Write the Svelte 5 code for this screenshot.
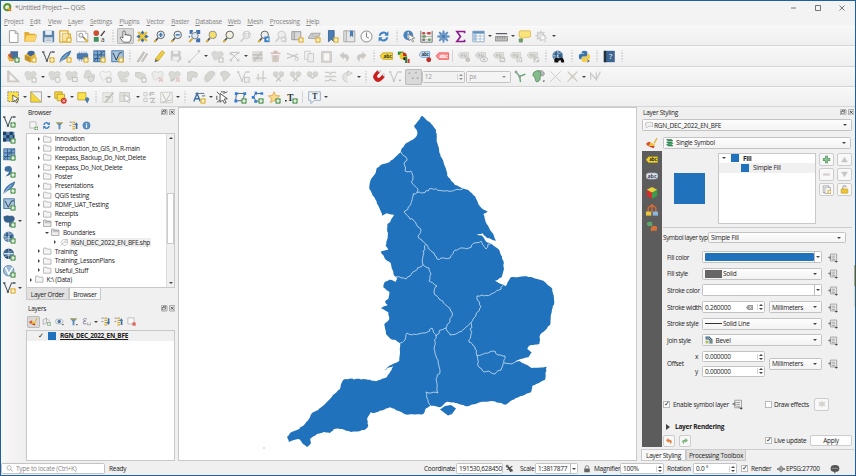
<script>
  // ---------- icon drawing helpers (16 x 16 grid) ----------
  const badge = (c, x = 9, y = 9) =>
    `<rect x="${x}" y="${y}" width="6.6" height="6.6" rx="1" fill="${c}"/><path d="M${x + 3.3} ${y + 1.2}v4.2M${x + 1.2} ${y + 3.3}h4.2" stroke="#fff" stroke-width="1.5"/>`;
  const yel = badge('#e2b73a');
  const grn = badge('#5f9d5f');
  const gry = badge('#c8c8c5');
  const blob = (c = '#d8d8d5') =>
    `<path d="M1 5c0-3 3-4 5-3s3 1 5 0 4 1 4 3-2 4-4 4-2 0-3 2-5 2-5-1C3 8 1 7 1 5z" fill="${c}" stroke="#c6c6c3" stroke-width=".7"/>`;
  const lens = (c = '#333', f = '#f4f6f6', inner = '') =>
    `<path d="M2 14.5l4-4.5" stroke="#555" stroke-width="2"/><path d="M1.6 15l2-2.2" stroke="#e0b030" stroke-width="2.4"/><circle cx="9.5" cy="6" r="4.6" fill="${f}" stroke="${c}" stroke-width="1.1"/>${inner}`;
  const greyLens = `<path d="M2 14.5l4-4.5" stroke="#ccc" stroke-width="2"/><circle cx="9.5" cy="6" r="4.6" fill="#eee" stroke="#c6c6c6" stroke-width="1.1"/>`;
  const tag = (f, s, t = '#333', a = 'abc') =>
    `<path d="M0 7.500l3.500-4h12v8h-12z" fill="${f}" stroke="${s}" stroke-width=".9"/><text x="9.3" y="9.700" font-size="6" font-weight="700" text-anchor="middle" fill="${t}" font-family="Open Sans, sans-serif" letter-spacing="-.2">${a}</text>`;
  const greyTag = (e) => `<path d="M0 6l3-3h10v7H3z" fill="#dededb" stroke="#c9c9c5" stroke-width=".8"/><path d="M4 5.5h2v2H4zM8 5v3h2V5.5" fill="none" stroke="#b5b5b5" stroke-width=".9"/>${e}`;
  const vee = (c, e) => `<path d="M1.5 2.5l4.5 11L10.500 2.500h3" fill="none" stroke="${c}" stroke-width="1.3"/><path d="M0 1.500h3v2H0zM12.500 1.500h3v2h-3zM4.800 12h2.500v2.500H4.800z" fill="${c}"/>${e}`;
  const globe = `<circle cx="7" cy="7" r="6.5" fill="#5d83a8"/><path d="M1 7h12M7 .5v13M2 3.500q5 3 10 0M2 10.500q5-3 10 0" stroke="#d5e3ef" stroke-width=".8" fill="none"/><path d="M3 4l3-2 1 3-2 3zM8 5l4-1v4l-3 2z" fill="#2f5f8a"/>`;
  const quill = `<path d="M1 15Q2 6 14.500 1 13 9 5 12z" fill="#4d86b8" stroke="#2d5a85" stroke-width=".7"/><path d="M1 15L10 5" stroke="#dce9f4" stroke-width=".8"/>`;
  const grid = `<rect x="1" y="1" width="13.500" height="13.500" fill="#7fa7cd" stroke="#34699c"/><path d="M1 6h13M1 10.500h13M5.500 1v13M10 1v13M1 14L10 4l4-3" stroke="#275684" stroke-width="1" fill="none"/>`;
  const cursor = (c = '#333') => `<path d="M7 5l7.500 5-3.300.4 2 3.500-1.400.9-2-3.600L7.500 13.500z" fill="#fff" stroke="${c}" stroke-width=".9"/>`;
  const funnel = (c = '#5f8fb8') => `<path d="M1.500 2h13L9.700 8v6.500H6.300V8z" fill="${c}"/><path d="M1.500 2h13l-1.300 2H2.800z" fill="#d9b33c"/>`;
  const sync = `<path d="M2 7a6 6 0 0 1 10-3.500l2-2V7H9l1.600-1.800A4 4 0 0 0 4.500 7zM14 9a6 6 0 0 1-10 3.500l-2 2V9h5l-1.600 1.800A4 4 0 0 0 11.500 9z" fill="#3f83c4"/>`;
  const info = `<circle cx="8" cy="8" r="6.500" fill="#5b8fc4" stroke="#3f6fa5" stroke-width=".8"/><path d="M8 6.800v5M8 3.800v1.800" stroke="#fff" stroke-width="2"/>`;
  const dots = (c) => `<path d="M2 3h3v3H2zM11 2h3v3h-3zM2 11h3v3H2zM11 11h3v3h-3z" fill="${c}"/>`;
  const undo = (c) => `<path d="M2 6.500L7 2v3c5 0 7 2 6.500 5-.4 2.500-2.500 4-4.500 4 2-2 2-4.500-2-4.500V12z" fill="${c}"/>`;
  const redo = (c) => `<g transform="matrix(-1 0 0 1 16 0)">${undo(c)}</g>`;
  const tree = `<path d="M6 2h5M6 6h5M6 10h5M6 14h5" stroke="#d6a92c" stroke-width="2"/><path d="M1 2h4M1 8h3" stroke="#777" stroke-width="1.400"/>`;

  const icons = {
    new: `<path d="M3 .8h7l3.500 3.500v11H3z" fill="#fff" stroke="#888"/><path d="M10 .8v3.500h3.500" fill="#ddd" stroke="#888" stroke-width=".8"/>`,
    open: `<path d="M.5 14V2.500h5l1.500 2h7V7" fill="#e2ac2b"/><path d="M.5 14L3 6h12.700l-2.500 8z" fill="#fcd56b" stroke="#dba83a" stroke-width=".6"/>`,
    save: `<rect x="1" y="1" width="14" height="14" rx="1" fill="#5a82a8"/><rect x="4" y="1" width="8" height="5" fill="#e8eef3"/><rect x="3" y="9" width="10" height="6" fill="#dfe6ec"/><path d="M4.500 11h7M4.500 13h7" stroke="#8fa5ba" stroke-width=".8"/>`,
    layout: `<path d="M1 1h10v4h3v10H1z" fill="#fff" stroke="#dcaa2c" stroke-width="1.600"/><path d="M4 4h8v10H4z" fill="#f6e3a5" stroke="#d8aa34"/>${yel}`,
    layouts: `<path d="M1 1.500h11v3h2.500v10H1z" fill="#fff" stroke="#a2a2a2"/><path d="M6 6l6 6" stroke="#666" stroke-width="1.600"/><path d="M10.500 10.500l4 4" stroke="#e0b030" stroke-width="2.400"/><circle cx="6" cy="6.500" r="2.500" fill="#eee" stroke="#888"/>`,
    style: `<circle cx="4" cy="3.800" r="3.500" fill="#c94f32"/><rect x="1" y="8.500" width="6" height="6" fill="#3e9060"/><path d="M14.500 1l-5 6.500" stroke="#444" stroke-width="1.700"/><text x="12" y="14.500" font-size="8" text-anchor="middle" fill="#333" font-family="Open Sans, sans-serif">a</text>`,
    hand: `<path d="M5.500 15L2 10.500Q.8 8.800 2.500 8.500L4.800 10V2.500q0-1.500 1.400-1.500t1.400 1.500v4q0-1.200 1.200-1.200T10 6.700q.1-1 1.200-1t1.200 1.300q.2-.8 1.200-.8T14.800 8v3L13 15z" fill="#fff" stroke="#444" stroke-width=".9"/>`,
    panSel: `<path d="M8 .5l2.800 3.500H9.500v2.500H12V5.200L15.500 8 12 10.800V9.500H9.500V12h1.300L8 15.500 5.200 12h1.300V9.500H4v1.300L.5 8 4 5.200v1.300h2.500V4H5.200z" fill="#466fa0"/><path d="M2.500 2.500l4 4M13.500 2.500l-4 4M2.500 13.500l4-4M13.500 13.500l-4-4" stroke="#e4bd2f" stroke-width="2.600"/><rect x="5.500" y="5.500" width="5" height="5" fill="#f0cc3b"/>`,
    zin: lens('#555', '#e5edf4', '<path d="M9.500 3.500v5M7 6h5" stroke="#3c75b5" stroke-width="1.800"/>'),
    zout: lens('#555', '#e5edf4', '<path d="M7 6h5" stroke="#3c75b5" stroke-width="1.800"/>'),
    zfull: `<path d="M1.500 15l4-4.500" stroke="#d8aa34" stroke-width="2.200"/><circle cx="8.500" cy="7" r="4" fill="#dce8f2" stroke="#667"/><path d="M2 0h4v2L4 5H2zM15 0h-5v2l2 3h3zM1 10V7l2 1zM15 15h-5v-3l2-2h3z" fill="#3f72ad"/>`,
    zsel: lens('#888', '#f5df6f'),
    zlayer: lens('#555', '#f3f1df'),
    z11: greyLens + '<text x="9.500" y="8" font-size="5.500" text-anchor="middle" fill="#999" font-family="Open Sans, sans-serif">1:1</text>',
    zlast: lens('#555', '#eee', '<path d="M9 8h6.500v7H9z" fill="#3f83c4"/><path d="M14 9.500l-3 2 3 2" fill="#fff"/>'),
    znext: greyLens + '<path d="M9 8h6.500v7H9z" fill="#d0d0d0"/><path d="M10.500 9.500l3 2-3 2" fill="#fff"/>',
    newmap: `<path d="M1 2h11v10H1z" fill="#d8d8d8" stroke="#8e8e8e"/><path d="M4 2v10" stroke="#8e8e8e"/>${yel}`,
    new3d: `<path d="M0 10l4-6h11l-3 7z" fill="#cfcfcf" stroke="#989898"/><path d="M4 4l3 4h6" stroke="#aaa" fill="none"/>${yel}`,
    bookNew: `<path d="M3 .5h7v14l-3.500-3-3.500 3z" fill="#4a7db3" stroke="#345f8e"/>${yel}`,
    book: `<path d="M1 1h13.500v13.500H1z" fill="#e7e7e7" stroke="#9a9a9a"/><path d="M4 1v13" stroke="#9a9a9a"/><path d="M8.500 1h4v8l-2-2-2 2z" fill="#4a7db3"/>`,
    clock: `<circle cx="8" cy="8" r="6.800" fill="#fafafa" stroke="#888" stroke-width="1.200"/><path d="M8 3v5.500l3 1.500" fill="none" stroke="#777" stroke-width="1.100"/>`,
    sync,
    identify: `<circle cx="6.500" cy="6.500" r="6" fill="#4d83bb"/><path d="M6.500 5.500v4.500M6.500 2.800v1.700" stroke="#fff" stroke-width="1.700"/>${cursor('#777')}`,
    abacus: `<path d="M1 1v14M15 1v14M1 15h14" stroke="#777" stroke-width="1.200"/><path d="M1 4h14M1 8h14M1 12h14" stroke="#aaa"/><path d="M3 2.500h3v3H3zM9 2.500h4v3H9z" fill="#c94848"/><path d="M3 6.500h4v3H3zM10 10.500h3v3h-3z" fill="#5aa05a"/><path d="M3 10.500h3v3H3z" fill="#777"/>`,
    gear: `<path d="M8 .5v15M.5 8h15M2.700 2.700l10.600 10.600M13.300 2.700L2.700 13.300" stroke="#5a88bd" stroke-width="2.200"/><circle cx="8" cy="8" r="5" fill="#6d9bcb"/><circle cx="8" cy="8" r="1.800" fill="#4a75a8"/>`,
    sigma: `<path d="M13 4V1.800H3.500L8 8l-4.500 6.200H13V12" fill="none" stroke="#8c1a8c" stroke-width="2"/>`,
    table: `<path d="M1 1.500h14v13H1z" fill="#fff" stroke="#7f9fbe"/><path d="M1 1.500h14v3H1z" fill="#5f8fbf"/><path d="M1 4.500h4v10H1z" fill="#b4cde4"/><path d="M1 7.500h14M1 11h14M5 4v10M10 4v10" stroke="#8cacc8" stroke-width=".8"/>`,
    measure: `<path d="M.5 8h15v5.500H.5z" fill="#bcbcbc" stroke="#888"/><path d="M1 4.500h14" stroke="#445" stroke-width="1.300"/><path d="M3 8v2.500M6 8v2.500M9 8v2.500M12 8v2.500" stroke="#777" stroke-width=".8"/>`,
    tip: `<path d="M3 1h11q1.500 0 1.500 1.500v5Q15.500 9 14 9H8l-4 4 .5-4H3Q1.500 9 1.500 7.500v-5Q1.500 1 3 1z" fill="#fbe37b" stroke="#d3b13a" stroke-width=".9"/><rect x="1" y="10.500" width="5" height="5" rx="1" fill="#6c9b6c"/>`,
    gearG: `<path d="M7 .5v13M.5 7h13M2.400 2.400l9.200 9.200M11.600 2.400l-9.200 9.200" stroke="#d2d2d2" stroke-width="2"/><circle cx="7" cy="7" r="4.300" fill="#ddd" stroke="#c4c4c4"/><circle cx="7" cy="7" r="1.800" fill="#f5f5f5"/>${cursor('#c4c4c4')}`,

    dsm: `<path d="M1 6l4-3 5 2v7l-5 2z" fill="#c9582c"/><path d="M0 8l3 6 7-2" fill="#e4b13a"/><path d="M4 1.500h9.500v9H6z" fill="#466fa0"/>${grn}`,
    gpkg: `<path d="M1 6l6.500-4 7 3.500v6.500L8 15.500 1 12z" fill="#e7b93c"/><path d="M1 6l7 3v6.500L1 12z" fill="#c2912a"/><path d="M4 5q0-4 5-4t4 4l-5 3z" fill="#3f6796"/>${yel}`,
    shp: vee('#555f66', yel), quillY: quill + yel,
    chip: `<rect x="2" y="4" width="12" height="7.500" fill="#466fa0"/><path d="M4 2v12M7 2v12M10 2v12M12.500 2v12" stroke="#6b93c0" stroke-width="1"/><rect x="1" y="4.500" width="14" height="6" fill="#4c7aae"/>${yel}`,
    mesh: grid + yel, vrt: `<rect x="1" y="1" width="14" height="13.500" fill="#a9c6e0" stroke="#34699c"/><path d="M2.500 3.500l4 9 4-9h3" stroke="#345" fill="none" stroke-width="1.200"/>${yel}`,
    pencils: `<path d="M2 12L9 1.500l2.500 1.700-7 10.500zM6 14l7-10.500 2 1.500-6.500 10z" fill="#c6c1bc"/><path d="M1 15l1-3 2.500 1.700z" fill="#aaa"/>`,
    pencil: `<path d="M3 11L11 .8l3.300 2.400L6.500 13.500z" fill="#f0cf3c" stroke="#b99722" stroke-width=".8"/><path d="M2 15l1-4 3.500 2.500z" fill="#665"/>`,
    saveG: `<rect x="1" y="1" width="12" height="12" fill="#c9c9c9"/><rect x="4" y="1" width="6" height="4" fill="#efefef"/><rect x="3" y="8" width="8" height="5" fill="#eee"/><path d="M9 15l5-6" stroke="#ccc" stroke-width="2"/>`,
    lineG: `<path d="M2 14L14 2" stroke="#ccc" stroke-width="1.200"/><path d="M0 13h3v3H0zM12 0h3v3h-3z" fill="#ccc"/>`,
    polyG: blob() + gry,
    vertexG: `<path d="M3 3l9 9M3 13l4-5 7-5M3 3h9" stroke="#bdbdba" stroke-width="1.200" fill="none"/>${dots('#ccc')}`,
    attrG: `<rect x="1.500" y="1.500" width="13" height="13" fill="#dfdbd6"/><path d="M4 14L13 2M2 6h12M2 10h12" stroke="#bababa" stroke-width="1.300"/>`,
    trashG: `<path d="M2 4h12M5.500 2h5" stroke="#d4bab8" stroke-width="2"/><path d="M3 6h10l-1 9H4z" fill="#dccfcd"/><path d="M6 7v7M8 7v7M10 7v7" stroke="#bba" stroke-width=".8"/>`,
    cutG: `<path d="M1 4l14 5.500M1 10.500L15 5" stroke="#c4c4c4" stroke-width="1.400"/><circle cx="13" cy="11" r="2" fill="none" stroke="#c4c4c4"/>`,
    copyG: `<path d="M2 1.500h7v10H2z" fill="#f2f2f2" stroke="#c6c6c6"/><path d="M6 4.500h7v10H6z" fill="#eee" stroke="#c2c2c2"/>`,
    pasteG: `<path d="M2 2h12v13H2z" fill="#d8d4cc" stroke="#c2c2c2"/><path d="M4.500 4h7v9h-7z" fill="#f6f6f6"/>`,
    undoG: undo('#ccc9c4'), redoG: redo('#ccc9c4'),
    abcY: tag('#f3d735', '#b59a1c', '#333'),
    pie: `<path d="M1 2h7v4H1z" fill="#2f8b3d"/><circle cx="7.500" cy="7.500" r="4.500" fill="#e9c52e"/><path d="M7.500 7.500V3a4.500 4.500 0 0 1 4.500 4.500z" fill="#c8281c"/><circle cx="9.500" cy="10.500" r="2" fill="#222"/><path d="M10 8h2.500v8H10z" fill="#288339"/><path d="M13 11h2.500v5H13z" fill="#d33"/>`,
    abcB: `<path d="M0 6l3-4h10v7H3z" fill="#cfe2f5" stroke="#5d94cf"/><text x="7.500" y="7.700" font-size="5.500" font-weight="700" text-anchor="middle" fill="#234" font-family="Open Sans, sans-serif" letter-spacing="-.2">abc</text><circle cx="12" cy="12" r="3" fill="#b92d25"/>`,
    abcR: tag('#ff8f8f', '#ee4444', '#fff'),
    lab1: greyTag('<circle cx="12" cy="12" r="3" fill="#cbc3c0"/>'),
    lab2: greyTag('<ellipse cx="11" cy="11.500" rx="4.500" ry="3" fill="#eee" stroke="#b8b8b8"/><circle cx="11" cy="11.500" r="1.300" fill="#b8b8b8"/>'),
    lab3: greyTag('<path d="M8 9h7v6H8z" fill="#c8c8c4"/><path d="M9.500 12h4" stroke="#fff" stroke-width="1.400"/>'),
    lab4: greyTag('<path d="M8 9h7v6H8z" fill="#c8c8c4"/><circle cx="11.500" cy="12" r="1.700" fill="none" stroke="#fff"/>'),
    lab5: greyTag('<path d="M8 9h7v6H8z" fill="#c8c8c4"/><path d="M10 14l4-4" stroke="#fff" stroke-width="1.400"/>'),
    metasearch: globe.replaceAll('#5d83a8', '#557da5') + `<path d="M3 15q-1-5 3-6l1 1h3l1-1q4 1 4 6-2 1-4 0V12.500H8V15q-3 1-5 0z" fill="#111"/>`,
    python: `<path d="M7.500 1q4 0 4 2v3.500q0 1.500-1.500 1.500H6Q4.500 8 4.500 10v1.500H3Q1 11.500 1 8t2.500-3.500h4V4H4.500V3q0-2 3-2z" fill="#3a74a8"/><path d="M8.500 15q-4 0-4-2v-3Q4.500 8.500 6 8.500h4q1.500 0 1.500-2V5H13q2 0 2 3.200T12.500 12h-4v.5h3V13q0 2-3 2z" fill="#f3cd45"/><path d="M11 12l3 1.500-3 1.500" stroke="#555" fill="none"/>`,
    help: `<rect x="1" y="1" width="13.500" height="14" fill="#3c6491"/><path d="M1 1h3v14H1z" fill="#27303a"/><text x="9.300" y="11.500" font-size="9.500" text-anchor="middle" fill="#fff" font-family="Open Sans, sans-serif">?</text>`,

    cadG: `<path d="M2 2l12 12H2z" fill="none" stroke="#cdcac5" stroke-width="2"/><path d="M1 1v14" stroke="#d3c5c2" stroke-width="1.500"/>`,
    g1: blob() + gry, g2: blob() + '<circle cx="12" cy="12" r="3.300" fill="#eee" stroke="#b8b8b8"/>',
    g3: blob() + '<rect x="9" y="9" width="6" height="5" fill="#eee" stroke="#b8b8b8"/>',
    g4: `<g transform="rotate(40 8 8)">${blob()}</g><circle cx="11" cy="11" r="3.500" fill="#ddd" stroke="#c2c2bf"/>`,
    g5: blob('#f2f2f2') + gry, g6: blob() + `<path d="M3 15q4-6 10-4v4z" fill="#d4d4d1"/>`,
    g7: `<path d="M2 3h6l6 3-2 5H8L2 8z" fill="#d8d8d5" stroke="#c6c6c3"/>${gry}`,
    gx: blob('#ececec') + `<path d="M9.500 9.500l5 5M14.500 9.500l-5 5" stroke="#e0c2bf" stroke-width="1.700"/>`,
    gx2: blob() + `<path d="M3 14l5-3" stroke="#c6c6c6" stroke-width="2"/><path d="M9.500 9.500l5 5M14.500 9.500l-5 5" stroke="#e0c2bf" stroke-width="1.700"/>`,
    g8: `<path d="M2 3q6-3 12 1l-1 5-5-1-2 6-4-1z" fill="#d6d6d3" stroke="#c6c6c3"/>`,
    g9: `<path d="M2 11Q3 3 10 1.500q5 0 4.500 4L8 13q-5 4-6-2z" fill="#d4d4d1" stroke="#c6c6c3"/>`,
    g10: `<path d="M1 3q5-3 9 0 4 3 1 5l-6 6q-2-3-1-5-4-2-3-6z" fill="#d6d6d3" stroke="#c6c6c3"/>`,
    g11: vee('#cacac7', '<rect x="9" y="9" width="6" height="6" fill="#eee" stroke="#bdbdbd"/>'),
    g12: `<path d="M1 10h13M10 1v14M4 5v8" stroke="#ccccc9" stroke-width="1.600"/>`,
    g13: `<circle cx="4.500" cy="5" r="3.500" fill="#d4d4d1"/><circle cx="11.500" cy="5" r="3.500" fill="#d4d4d1"/><path d="M4 7l7 7M12 7l-7 7" stroke="#c8c8c5" stroke-width="1.700"/>`,
    g14: `<circle cx="4.500" cy="5" r="3.500" fill="#d4d4d1"/><circle cx="11.500" cy="5" r="3.500" fill="#d4d4d1"/><path d="M4 7l4 3 4-3" stroke="#c8c8c5" stroke-width="1.700" fill="none"/>`,
    g15: `<path d="M1 3h5l2 2 2-2h5M1 8h14M1 13h5l2-2 2 2h5" stroke="#ccccc9" stroke-width="1.600" fill="none"/>`,
    g16: `<path d="M8 3q-6 1-6 6t6 6M8 1v6l6-3z" fill="#e3e3e0" stroke="#c6c6c3"/>`,
    magnet: `<g transform="rotate(42 8 8)"><path d="M1.800 1.500h4.200v6q0 2 2 2t2-2v-6h4.200V8q0 6.500-6.200 6.500T1.800 8z" fill="#cb1f1f"/><path d="M1.800 1h4.200v2.500H1.800zM10 1h4.200v2.500H10z" fill="#e5e5e5" stroke="#999" stroke-width=".5"/></g>`,
    snapG: vee('#c6c6c3', '<path d="M12 12h3l-1.500 2z" fill="#999"/>'),
    dots4: `<path d="M2 3h2v2H2zM10 2h2v2h-2zM6 9h2v2H6zM12 9h2v2h-2z" fill="#aaa"/>`,
    topo: `<path d="M2 2l5 6 7-3M7 8l1 7" stroke="#5ea96b" stroke-width="1.700" fill="none"/><path d="M1 1h3v3H1zM5.500 6.500h3v3h-3z" fill="#999"/>`,
    avoid: `<path d="M8 1q6-1 7 3 0 4-4 3z" fill="#bbb" stroke="#888"/><path d="M2 3q5-4 8-1 2 3 0 5 1 5-2 7-4 2-4-3 0-3-3-4z" fill="#84bd8c" stroke="#5a8a60"/><path d="M13 13h3l-1.500 2z" fill="#555"/>`,
    crossG: `<path d="M1.500 1.500l13 13M14.500 1.500l-13 13" stroke="#ccc" stroke-width="1.200"/>`,
    selfG: `<path d="M2 2l12 12M14 2L2 14" stroke="#c9c4ba" stroke-width="1.400"/><circle cx="8" cy="8" r="2.500" fill="#d6d0bf"/>`,
    nG: `<path d="M2 12V4l7 8V3M9 12l5-10" stroke="#ccc" stroke-width="1.600" fill="none"/>`,

    selY: `<rect x="1" y="1" width="13" height="12" fill="#fbe14a" stroke="#777" stroke-dasharray="2 1.200"/>${cursor('#444')}`,
    selTri: `<rect x="1" y="1" width="13" height="12.500" fill="#f3f3ee" stroke="#999"/><path d="M1 1l13 12.500H1z" fill="#f5d73c" stroke="#a8963a" stroke-width=".6"/>`,
    deselect: `<path d="M1 1h9v8H1z" fill="#f7d43c" stroke="#b6962a"/><path d="M4 4h9v8H4z" fill="#fbe14a" stroke="#b6962a"/><circle cx="12" cy="12" r="3.600" fill="#d8382e"/><path d="M10.500 10.500l3 3M13.500 10.500l-3 3" stroke="#fff"/>`,
    selLoc: `<path d="M1 2h10v9H1z" fill="#fbe14a" stroke="#bba132"/><path d="M12.500 15.500L10.300 11.500a2.500 2.500 0 1 1 4.400 0z" fill="#4b7fa8"/>`,
    ad1: `<rect x="1" y="2" width="12" height="12" fill="#e9e9e5" stroke="#c9c9c6" stroke-dasharray="3 1"/><path d="M4 14L14 2M4 7h6" stroke="#c0c0bc" stroke-width="2"/>`,
    ad2: `<rect x="1" y="2" width="12" height="11" fill="#e2e2dd" stroke="#c6c6c3"/><path d="M2 6h10M6 2v10" stroke="#c9c9c6"/>${cursor('#bbb')}`,
    ad3: `<path d="M1 2h4v4H1zM1 9h4v4H1z" fill="none" stroke="#c0c0c0"/><path d="M7 4h7M14 2H9v4M8 9h6l-4 5h5" stroke="#c0c0c0" stroke-width="1.500" fill="none"/>`,
    ad4: `<rect x="1" y="1.500" width="14" height="13" fill="#f2f2f0" stroke="#c4c4c1"/><path d="M3 3l4.500 9L13 3M2 14l12-3" stroke="#c0c0c0" stroke-width="1.200" fill="none"/>`,
    annoA: `<path d="M1 13L5 3l4 10M2.500 9.500h5" stroke="#3c6fa6" stroke-width="1.700" fill="none"/><path d="M3 3h11M11 6h4" stroke="#57707f" stroke-width="1.200"/>${yel}`,
    annoSel: `<path d="M1 1l3 3M6 1h5M1 6v5M1 14l4-3M9 3l5-2" stroke="#555" stroke-width="1.200"/><path d="M5 3l9 6.500-4 .5 2.500 4-2 1.200L8 11l-3 3z" fill="#fff" stroke="#333"/>`,
    annoPoly: `<path d="M3 3h10l-2 9H2z" fill="none" stroke="#566" stroke-width="1.200"/><path d="M1 1.500h3.500v3.500H1zM11.500 1.500h3.500v3.500h-3.500zM.5 10.500h3.500v3.500H.5z" fill="#2f7de0"/>${grn}`,
    annoLine: `<path d="M13 3H6L3 7l3 5 6 1" fill="none" stroke="#566" stroke-width="1.200"/><path d="M11.500 1.500h3.500v3h-3.500zM4.500 1h3v3.500h-3zM1 6h3.500v3.500H1zM4 11.500h3.500v3H4z" fill="#2f7de0"/>${grn}`,
    annoStar: `<path d="M7.500 1l2 4.600 5 .4-3.800 3.300 1.200 5-4.400-2.700-4.400 2.700 1.200-5L.5 6l5-.4z" fill="#fbd98a" stroke="#dba345"/>${grn}`,
    annoT: `<text x="6.500" y="12" font-size="11.500" font-weight="700" text-anchor="middle" fill="#333" font-family="Liberation Serif, serif">T</text><path d="M0 11h2v2H0z" fill="#333"/>${grn}`,
    annoBox: `<path d="M.8 1h14.400v10.500H8L3.500 15.500v-4H.8z" fill="#eef4fb" stroke="#90a4b5"/><text x="8.500" y="9.700" font-size="9.500" font-weight="700" text-anchor="middle" fill="#333" font-family="Liberation Serif, serif">T</text>`,

    vAdd: vee('#4c5a60', grn),
    raster: `<path d="M0 1h14v12H0z" fill="#5d88b5"/><path d="M0 1h4v4H0zM8 1h4v4H8zM4 5h4v4H4zM0 9h4v4H0zM8 9h4v4H8zM12 5h2v4h-2z" fill="#1f3e63"/>${grn}`,
    meshAdd: grid + grn,
    csv: `<path d="M3 2q8-3 8 4t-8 8q5-4 4-6-5 1-5-3 0-2 1-3z" fill="#3f6f9f"/>${grn}`,
    quillG: quill + grn,
    virt: `<rect x="1" y="1" width="13" height="12" fill="#a9c6e0" stroke="#34699c"/><path d="M2.500 3.500l4 8 4-8h3" stroke="#345" fill="none" stroke-width="1.200"/>${grn}`,
    pg: `<path d="M1 2q5-2 7-.5Q14 0 14 5q-1 4-3 4v5H8V9H5q-4 0-4-7z" fill="#36618e" stroke="#264a70" stroke-width=".6"/>${grn}`,
    wms: globe + grn,
    wcs: globe.replaceAll('#5d83a8', '#244a72') + `<path d="M1 7h12" stroke="#cfe0ee" stroke-width="2"/>${grn}`,
    wfs: `<circle cx="7" cy="7" r="6.500" fill="#9dbbd6" stroke="#557fa6"/><path d="M3 3l4 8 5-8" stroke="#fff" stroke-width="1.800" fill="none"/>${grn}`,
    vNew: vee('#4c5a60', yel),

    addSel: `<path d="M1.500 1.500h11v11h-11z" fill="#f5f5f5" stroke="#999"/>${badge('#5f9d5f', 10, 10)}`,
    filter: funnel(), collapse: tree + `<path d="M12 14V7H9l4.500-5L16 7h-1v7z" fill="#3f73ad"/>`,
    info,
    brush: `<path d="M10 8l4-7 1.500 1-4 7z" fill="#e4b13a"/><path d="M6 7l6 3-2 4-8-3z" fill="#f2c23e"/><path d="M0 9q4-4 6-2l-2 5q-3 0-4-3z" fill="#d9542c"/><path d="M3 12l7 3 1.500-3z" fill="#c83c2a"/>`,
    group: `<path d="M2 13V5l6-3v9z" fill="none" stroke="#999" stroke-width="1.200"/><path d="M8 3l5 3v7" stroke="#aaa" fill="none"/>${badge('#8fae8f')}`,
    eye: `<ellipse cx="7.500" cy="8" rx="7" ry="4.500" fill="#eee" stroke="#8899a5"/><circle cx="7.500" cy="8" r="3" fill="#4d7ba5"/><path d="M12 13h4l-2 2z" fill="#333"/>`,
    filterD: funnel() + '<path d="M12 13h4l-2 2z" fill="#333"/>',
    expr: `<path d="M8.500 3.500Q3 1 2.500 4.500q0 2.500 4 2.700-5 .3-4.500 3.300.8 3.300 6 1.500" fill="none" stroke="#847090" stroke-width="1.500"/><path d="M10 10v4h5v-4" fill="none" stroke="#777"/>`,
    expand: tree + `<path d="M12 2v7H9l4.500 5L16 9h-1V2z" fill="#3f73ad"/>`,
    remove: `<path d="M1.500 1.500h11v11h-11z" fill="#f8f8f8" stroke="#999"/><rect x="9.500" y="9.500" width="6" height="6" rx="1.500" fill="#e26a62"/>`,

    labY: tag('#f3d735', '#a98f1c', '#222'),
    labW: `<path d="M0 8q0-4 4-4h8q4 0 4 4t-4 4H4q-4 0-4-4z" fill="#dfe6ee" stroke="#aab"/><text x="8" y="10.300" font-size="7" font-weight="700" text-anchor="middle" fill="#445" font-family="Open Sans, sans-serif">abc</text>`,
    cube: `<path d="M8 0l7 3.500L8 7.500 1 3.500z" fill="#e8d23c"/><path d="M1 3.500l7 4V16l-7-4z" fill="#cf3030"/><path d="M15 3.500l-7 4V16l7-4z" fill="#3f9a4a"/>`,
    diag: `<path d="M3 10V5l5-4 5 4v5M8 2v9" stroke="#cf6a3a" stroke-width="2" fill="none"/><path d="M0 10h7v5.500H0z" fill="#e9c63c"/><path d="M9 10h7v5.500H9z" fill="#8ab6e0"/>`,
    hist: `<path d="M1 4q5-4 8 0l-2 1q3 2 1 4L5 7 4 9Q1 8 1 4z" fill="#5ea96b"/><path d="M8 9q5-3 7 1l-1 5-2-1-5 1-1-4z" fill="#d8703a"/>`,
    plus: `<path d="M8 1.500v13M1.500 8h13" stroke="#579a62" stroke-width="5"/><path d="M8 2.500v11M2.500 8h11" stroke="#8cc394" stroke-width="3"/>`,
    minus: `<path d="M2 8h12" stroke="#d6cfcf" stroke-width="4"/>`,
    up: `<path d="M8 3l6 10H2z" fill="#c6c6c9"/>`, down: `<path d="M8 13L2 3h12z" fill="#c6c6c9"/>`,
    dup: `<path d="M2 1.500h10v12H2z" fill="#fff" stroke="#777"/><path d="M5 4h10v11H5z" fill="#f2f2f2" stroke="#888"/>${badge('#d8b64d', 10, 9)}`,
    lock: `<path d="M5 7V4.500Q5 1.500 8 1.500t3 3" fill="none" stroke="#999" stroke-width="1.800"/><rect x="2" y="7" width="12" height="7.500" rx="1" fill="#efc62e" stroke="#ba951f"/>`,
    single: `<path d="M1 1h10l3 3H4zM1 6h10l3 3H4zM1 11h10l3 3H4z" fill="#2f9a5a" stroke="#1f6b3f"/>`,
    poly: `<path d="M1 4q6-3 14-1v8q-5-2-9 0l-3 3-1-3z" fill="#f1f1f1" stroke="#999" stroke-width="1"/>`,
    dd: `<path d="M5 3h9M5 3v10h9V3M7 6h5M7 8.500h5M7 11h5" stroke="#888" fill="none"/><path d="M6 5L1 8l5 3z" fill="#888"/><path d="M11 13h5l-2.500 2.500z" fill="#444"/>`,
    bevel: `<path d="M1 1h8l6 6v8H9V9L7 7H1z" fill="#3c6491"/><path d="M3 4h5l4 4v6" stroke="#dede77" stroke-width="1.400" fill="none"/><path d="M1 9h6v6H1z" fill="#aebf6a"/>`,
    star: `<path d="M8 0l2 5 5-2-2 5 2 5-5-2-2 5-2-5-5 2 2-5-2-5 5 2z" fill="#d5d2c9"/>`,
    undoO: undo('#e5813f'), redoO: redo('#7fb583'),
    glass: `<circle cx="7" cy="6.500" r="5" fill="none" stroke="#888" stroke-width="1.300"/><path d="M10.500 10l4.500 5" stroke="#888" stroke-width="1.600"/>`,
    ext: `<path d="M2 3l6 4 5-3M3 10l6-2 4 5M4 3l6 11" stroke="#444" stroke-width="1.800" fill="none"/><circle cx="4" cy="4" r="2.500" fill="#666"/><circle cx="11" cy="11" r="2.500" fill="#555"/>`,
    padlock: `<path d="M4.500 7V4.500Q4.500 1.500 8 1.500t3.500 3V7" fill="none" stroke="#777" stroke-width="1.700"/><rect x="2.500" y="7" width="11" height="7.500" fill="#666"/>`,
    crs: `<path d="M8 1l7 7-7 7-7-7z" fill="#777"/><path d="M0 6.500h16v3.500H0z" fill="#777"/><path d="M1 8h14M8 1v14M4 4.500q4 2.500 8 0M4 11.500q4-2.500 8 0" stroke="#ccc" stroke-width=".8" fill="none"/>`,
    msg: `<path d="M8 1.500q7 0 7 5.500T9 12.500l-1 3-2-3Q1 12 1 7q0-5.500 7-5.500z" fill="#555"/><path d="M4 7h1.500M7.200 7h1.500M10.500 7H12" stroke="#ddd" stroke-width="1.500"/>`,
    dock: `<rect x="1" y="1" width="14" height="14" rx="2" fill="#eee" stroke="#777" stroke-width="1.400"/><rect x="6" y="3.500" width="6" height="5" fill="none" stroke="#555" stroke-width="1.300"/><rect x="4" y="6.500" width="6" height="5.500" fill="#eee" stroke="#555" stroke-width="1.300"/>`,
    close: `<rect x="1" y="1" width="14" height="14" rx="2" fill="#e6e6e6" stroke="#777" stroke-width="1.400"/><path d="M4.500 4.500l7 7M11.500 4.500l-7 7" stroke="#333" stroke-width="2"/>`,
    folder: `<path d="M1 13.500V3q0-1 1-1h4l1.500 2H14q1 0 1 1v8.500z" fill="#f5f5f5" stroke="#969696" stroke-width="1.200"/>`,
    folderOpen: `<path d="M1 14V2h5l1.500 2H15v10z" fill="#f0f0f0" stroke="#888" stroke-width="1.200"/><path d="M3 7h12M3 4.500h11" stroke="#999" stroke-width="1.200"/>`,
    shape: `<path d="M1 14L14 2M2 8l4-5h8v8l-4 3H7zM8 8h6" stroke="#aaa" stroke-width="1.200" fill="none"/>`,
  };

  // ---------- toolbars: icon name, v (drop-down arrow), | (handle), : (separator), number (spacing) ----------
  const menus = [['Project', 26], ['Edit', 18], ['View', 20], ['Layer', 22], ['Settings', 29.3], ['Plugins', 27.2], ['Vector', 24.8], ['Raster', 24], ['Database', 32.5], ['Web', 19.5], ['Mesh', 22.5], ['Processing', 36.5], ['Help', 20]];
  const bars = [
    'new open save layout layouts style | *hand panSel zin zout zfull zsel zlayer z11 zlast znext newmap new3d bookNew book clock sync | identify abacus gear sigma table v measure v tip gearG v',
    'dsm gpkg shp quillY chip mesh vrt | pencils pencil saveG lineG v polyG vertexG v attrG trashG cutG copyG pasteG undoG redoG | abcY pie 4 abcB abcR : lab1 lab2 lab3 lab4 lab5 | metasearch | python | help |',
    'cadG g1 v g2 g3 g4 g5 g6 g7 gx gx2 g8 g9 g10 g11 g12 g13 g13 g14 g15 g16 v | magnet snapG *dots4 # topo avoid crossG selfG v nG',
    'selY v selTri v deselect v selLoc | ad1 ad2 v ad3 ad4 v | 2 annoA v annoSel annoPoly annoLine annoStar annoT : annoBox v',
  ].map((s) => s.split(' '));
  const side = ['vAdd', 'raster', 'meshAdd', 'csv', 'quillG', 'virt', 'pg', 'wms', 'wcs', 'wfs', 'vNew'];

  const files = [
    ['Innovation', 1, 0], ['Introduction_to_GIS_in_R-main', 1, 0], ['Keepass_Backup_Do_Not_Delete', 1, 0], ['Keepass_Do_Not_Delete', 1, 0],
    ['Poster', 1, 0], ['Presentations', 1, 0], ['QGIS testing', 1, 0], ['RDMF_UAT_Testing', 1, 0], ['Receipts', 1, 0], ['Temp', 1, 1],
    ['Boundaries', 2, 1], ['RGN_DEC_2022_EN_BFE.shp', 3, 0], ['Training', 1, 0], ['Training_LessonPlans', 1, 0], ['Useful_Stuff', 1, 0], ['K:\\ (Data)', 0, 0],
  ];

  // ---------- map geometry ----------
  let seed = 7;
  const rnd = () => ((seed = (seed * 16807) % 2147483647) / 2147483647) - 0.5;
  function rough(pts, amp, closed) {
    const p = pts.trim().split(/\s+/).map((s) => s.split(',').map(Number));
    const out = [];
    const n = closed ? p.length : p.length - 1;
    for (let i = 0; i < n; i++) {
      const a = p[i], b = p[(i + 1) % p.length];
      const steps = Math.max(1, Math.round(Math.hypot(b[0] - a[0], b[1] - a[1]) / 2.2));
      for (let k = 0; k < steps; k++) {
        const t = k / steps, w = k ? amp : 0;
        out.push(`${(a[0] + (b[0] - a[0]) * t + rnd() * w).toFixed(1)},${(a[1] + (b[1] - a[1]) * t + rnd() * w).toFixed(1)}`);
      }
    }
    if (!closed) out.push(p[p.length - 1].join(','));
    return out.join(' ');
  }
  const england = rough(`422,116.700 417.300,123 414,127 417.300,132.700 416.700,136.700 412.700,140.700 406,144.300 402,149.300 400.700,153.300 395,158.300 389.300,163.300 380.700,166 376.700,169.300 375,175 370.700,180.700 369.300,190 374.300,198.300 378.300,206.700 382.300,216.700 386.700,214.300 394,215.700 390,223.300 387.300,225 387.700,236.700 385.700,246.700 388.300,250.700 380.700,252.700 385,260 390.700,264 391.700,269.300 394.300,276.700 397.300,279.300 396,282.700 389.300,280.700 385,282.700 383.300,288.300 389.300,292.700 388.300,300 385,302.700 387.700,306 380.700,309.300 388.300,313.300 389.300,320 384.300,325 386,335 390.700,340 395,340.700 400,344.300 399.300,361.700 391.700,365.700 384,371 393.300,367.300 386.700,378.300 376,382.300 363.300,380 345,380 342,383 340,390 333,396 325,405 318,411 312,414 309,420 303,427 297,431 290,434 287,438 289,443 294,441 299,440 303,445 307,448 311,444 310,440 317,435 324,433 330,434 334,430 342,430 351,433 360,432 366,430 368.300,426.700 367,420 370.700,413.300 374.300,414 390,408.300 401.700,413.300 406.700,415.700 423.300,415 426,409.300 431.700,406.700 440,408.300 447.300,402.700 455,404 467.300,407.300 480,403.300 493.300,402.300 505,405.700 520,397.300 531,393.300 532.300,386.700 545,380.700 546.700,367.700 531.700,369 520,362.300 513,362.300 528.300,358.300 531.700,353.300 527.300,350 529.300,346.700 539.300,345 540,336 550,326 551.700,313.300 554.300,303.300 552.300,290 543.300,281.700 526.700,277.300 510.700,278.300 505.700,287.300 501,285 495,281.700 501.700,278.300 504,270 503.300,261.700 498.300,250 491.700,245 486.700,243.300 481.700,236.500 476.700,236 482.700,234.300 487,239 496,241.700 493.300,235 486.700,225 483.300,215 487.700,212.700 481.700,209.300 478.300,205 475,197.300 468.300,191 455,186 448.300,178.300 444,165 439.300,153.300 436.700,140 436,130.700 430,123.300`, 0.9, true);
  const wight = '440,410.500 445,407 451,406 456,409.500 452,415 448,416.500';
  const borders = [
    '401,153 407,160 404,165 405,172 411,172 413,178 412,184 418,190 417,193.500',
    '417,193.500 425,193.500 432,189.500 438,191.500 445,192 455,191 462,190.500 463,187.500',
    '417,193.500 413,195 411,205 404,213 409,218 414,222 418,228 421,231 418,237 426,245.500',
    '426,245.500 432,253 437,260 444,259 450,259 455,251 462,249 469,249 474,244 481,242 486,250 488,245 491,245',
    '426,245.500 423,252 423,265.500',
    '423,265.500 415,272 406,280 396,277.500',
    '423,265.500 429,269 431,275 429,282 437,287 434,293 439,300 447,307 452,313 450,322 446,329',
    '446,329 441,331 436,337 432,329 425,334 418,335 412,336 407,334 405,341 400,344',
    '436,337 434,350 438,363 440,372 436,380 438,394 426,393 427,399 431,407',
    '446,329 450,336 459,333 464,330 471,323.500',
    '471,323.500 476,316 481,308 477,300 477,297 490,296 499,291 504,285 505.500,283',
    '471,323.500 471,335 469,343 475,348 477,356.500',
    '477,356.500 486,354 493,352 498,356 505,357 504,363 501,371 495,375 489,372 484,373 478,367 477,356.500',
    '504,364 511,365 518,362',
  ].map((b) => rough(b, 1.9, false));
</script>

{#snippet ic(name, size = 13)}
  <svg class="ic" width={size} height={size} viewBox="0 0 16 16">{@html icons[name]}</svg>
{/snippet}
{#snippet dockbtns()}
  <span class="dockbtns">{@render ic('dock', 6.5)}{@render ic('close', 6.5)}</span>
{/snippet}
{#snippet spin()}
  <span class="spin"><i class="tri upw"></i><i class="tri"></i></span>
{/snippet}

<div class="window">
  <header class="title">
    <svg width="9" height="9" viewBox="0 0 16 16"><circle cx="7.500" cy="7.500" r="5.500" fill="none" stroke="#589632" stroke-width="3.600" /><path d="M8 8l3 .3 4.500 4.500-2.200 2.400L8.300 10.500z" fill="#ee7913" /><path d="M8 8l4 4" stroke="#f4e02a" stroke-width="1.500" /></svg>
    <span>*Untitled Project — QGIS</span>
    <svg class="winctl" width="65" height="8" viewBox="0 0 65 8" fill="none" stroke="#555" stroke-width=".8"><path d="M1 4h5M25.500 1.500h5v5h-5zM49.500 1.500l5 5M54.500 1.500l-5 5" /></svg>
  </header>
  <nav>
    {#each menus as [m, w]}<span style:width="{w}px"><u>{m[0]}</u>{m.slice(1)}</span>{/each}
  </nav>
  {#each bars as bar}
    <div class="bar">
      {#each bar as t}
        {#if t === 'v'}<span class="arr"><i class="tri"></i></span>
        {:else if t === '|'}<span class="handle"></span>
        {:else if t === ':'}<span class="sep"></span>
        {:else if t === '#'}
          <span class="field tol">12{@render spin()}</span><span class="field unit">px<i class="tri"></i></span>
        {:else if t > '0' && t < '9'}<span style:width="{t}px"></span>
        {:else}<span class="cell" class:on={t[0] === '*'}>{@render ic(t.replace('*', ''))}</span>{/if}
      {/each}
    </div>
  {/each}

  <main>
    <aside class="side">
      <span class="grip"></span>
      {#each side as s}
        <span class="sicon">{@render ic(s)}{#if s === 'pg' || s === 'vNew'}<i class="tri"></i>{/if}</span>
      {/each}
    </aside>

    <section class="left">
      <h2>Browser{@render dockbtns()}</h2>
      <div class="tools">
        {#each ['addSel', 'sync', 'filter', 'collapse', 'info'] as t}<span class="tool">{@render ic(t, 9)}</span>{/each}
      </div>
      <div class="box browser">
        <div class="list">
          {#each files as [name, depth, open]}
            <div class="row" style:padding-left="{1 + depth * 8.2}px">
              <span class="exp"><i class={open ? 'tri' : 'tri rt'}></i></span>
              {@render ic(depth === 3 ? 'shape' : open ? 'folderOpen' : 'folder', 8.5)}
              <span class="name" class:hl={depth === 3}>{name}</span>
            </div>
          {/each}
        </div>
        <div class="scroll"><b><i class="tri upw"></i></b><em></em><b><i class="tri"></i></b></div>
      </div>
      <div class="tabs"><span class="tab lo">Layer Order</span><span class="tab act br">Browser</span></div>
      <h2 class="lh">Layers{@render dockbtns()}</h2>
      <div class="tools lt">
        {#each ['brush', 'group', 'eye', 'filterD', 'expr', 'v', 'expand', 'collapse', 'remove'] as t}
          {#if t === 'v'}<span class="arr"><i class="tri"></i></span>{:else}<span class="tool" class:on={t === 'brush'}>{@render ic(t, 9)}</span>{/if}
        {/each}
      </div>
      <div class="box layers">
        <div class="layer"><span class="chk">✓</span><i class="sw"></i><b>RGN_DEC_2022_EN_BFE</b></div>
      </div>
    </section>

    <div class="canvas">
      <svg width="457" height="352" viewBox="179 109 457 352">
        <polygon points={england} fill="#2072bc" />
        <polygon points={wight} fill="#2072bc" />
        {#each borders as b}<polyline points={b} fill="none" stroke="#d9e8f5" stroke-width=".75" />{/each}
        <circle cx="264" cy="449" r=".7" fill="#89b1d8" />
      </svg>
    </div>

    <section class="right">
      <h2>Layer Styling{@render dockbtns()}</h2>
      <div class="field combo top">{@render ic('poly', 8)}RGN_DEC_2022_EN_BFE<i class="tri"></i></div>
      <div class="styling">
        <div class="strip">
          <span class="st act">{@render ic('brush', 12)}</span>
          {#each ['labY', 'labW', 'cube', 'diag', 'hist'] as s}<span class="st">{@render ic(s, 12)}</span>{/each}
        </div>
        <div class="body">
          <div class="field combo sym">{@render ic('single', 8)}<span class="symname">Single Symbol</span><i class="tri"></i></div>
          <div class="symrow">
            <div class="preview"></div>
            <div class="symtree">
              <div class="fr"><i class="tri"></i><i class="sw"></i><b>Fill</b></div>
              <div class="fr sub"><i class="sw"></i>Simple Fill</div>
            </div>
            <div class="btns">
              {#each ['plus', 'up', 'minus', 'down', 'dup', 'lock'] as b}<span class="btn">{@render ic(b, 9)}</span>{/each}
            </div>
          </div>
          <div class="type"><span>Symbol layer type</span><div class="field combo">Simple Fill<i class="tri"></i></div></div>
          <div class="form">
            <div class="fm"><span class="lb">Fill color</span><div class="field col"><i class="bluebar"></i><span class="drop"><i class="tri"></i></span></div>{@render ic('dd', 11)}</div>
            <div class="fm"><span class="lb">Fill style</span><div class="field combo"><i class="greybar"></i>Solid<i class="tri"></i></div>{@render ic('dd', 11)}</div>
            <div class="fm"><span class="lb">Stroke color</span><div class="field col"><span class="drop"><i class="tri"></i></span></div>{@render ic('dd', 11)}</div>
            <div class="fm"><span class="lb">Stroke width</span><div class="field num">0.260000<svg class="clr" width="7" height="5" viewBox="0 0 14 10"><path d="M0 5l4-5h10v10H4z" fill="#999" /><path d="M6 2.500l5 5M11 2.500l-5 5" stroke="#fff" stroke-width="1.500" /></svg>{@render spin()}</div><div class="field combo mm">Millimeters<i class="tri"></i></div>{@render ic('dd', 11)}</div>
            <div class="fm"><span class="lb">Stroke style</span><div class="field combo"><i class="line"></i>Solid Line<i class="tri"></i></div>{@render ic('dd', 11)}</div>
            <div class="fm"><span class="lb">Join style</span><div class="field combo">{@render ic('bevel', 8)}&nbsp;Bevel<i class="tri"></i></div>{@render ic('dd', 11)}</div>
            <div class="fm off"><span class="lb">Offset</span>
              <div class="xy"><div><span class="ax">x</span><div class="field num">0.000000{@render spin()}</div></div><div><span class="ax">y</span><div class="field num">0.000000{@render spin()}</div></div></div>
              <div class="field combo mm">Millimeters<i class="tri"></i></div>{@render ic('dd', 11)}
            </div>
          </div>
          <div class="enable"><span class="cb">✓</span><span class="el">Enable symbol layer</span>{@render ic('dd', 12)}<span class="cb de"></span><span class="del">Draw effects</span><span class="btn">{@render ic('star', 8)}</span></div>
          <div class="render"><i class="tri rt"></i><b>Layer Rendering</b></div>
          <div class="actions"><span class="btn">{@render ic('undoO', 8)}</span><span class="btn">{@render ic('redoO', 8)}</span><span class="cb lu">✓</span><span class="lut">Live update</span><span class="apply">Apply</span></div>
        </div>
      </div>
      <div class="tabs rt2"><span class="tab act ls">Layer Styling</span><span class="tab pt">Processing Toolbox</span></div>
    </section>
  </main>

  <footer>
    <span class="field locate">{@render ic('glass', 7)}Type to locate (Ctrl+K)</span><span class="ready">Ready</span>
    <span class="clab">Coordinate</span><span class="field coord">191530,628450</span>{@render ic('ext', 9)}
    <span class="slab">Scale</span><span class="field scale">1:3817877<span class="drop"><i class="tri"></i></span></span>{@render ic('padlock', 8)}
    <span class="mlab">Magnifier</span><span class="field mag">100%{@render spin()}</span>
    <span class="rlab">Rotation</span><span class="field rot">0.0 °{@render spin()}</span>
    <span class="cb">✓</span><span class="rend">Render</span>{@render ic('crs', 8)}<span class="epsg">EPSG:27700</span>{@render ic('msg', 10)}
  </footer>
  <i class="edge"></i>
</div>

<style>
  :global(body) { margin: 0; overflow: hidden; }
  .window { position: relative; width: 856px; height: 476px; box-sizing: border-box; border: 1px solid #1d609f; background: #f0f0f0; display: flex; flex-direction: column; font: 6.5px/9px 'Open Sans', 'Noto Sans', sans-serif; letter-spacing: -.25px; color: #222; overflow: hidden; white-space: nowrap; }
  .edge { position: absolute; right: -1px; top: 264px; width: 2px; height: 42px; background: linear-gradient(#c9a43c 21px, #e3d8ae 21px); }
  .ic { display: block; flex: none; letter-spacing: 0; }
  i, em { font-style: normal; display: block; flex: none; }
  .tri { border: 2px solid transparent; border-top: 2.5px solid #444; border-bottom: 0; }
  .tri.upw { border-top: 0; border-bottom: 2.5px solid #444; }
  .tri.rt { border: 2px solid transparent; border-left: 2.5px solid #444; border-right: 0; }
  .title { height: 13px; display: flex; align-items: center; padding-left: 2px; gap: 3px; color: #777; background: #f3f3f3; flex: none; }
  .winctl { margin-left: auto; }
  nav { height: 12px; display: flex; align-items: center; padding: 2px 0 0 3px; box-sizing: border-box; color: #858585; background: #f3f3f3; flex: none; }
  nav span { flex: none; }
  u { text-underline-offset: 1px; text-decoration-thickness: .5px; }
  .bar { height: 20.300px; box-sizing: border-box; border-bottom: 1px solid #d5d5d5; border-top: 1px solid #fafafa; background: linear-gradient(#f7f7f7, #efefef); display: flex; align-items: center; padding-left: 4px; flex: none; }
  .cell { width: 17.250px; height: 16px; display: flex; align-items: center; justify-content: center; flex: none; box-sizing: border-box; }
  .cell.on, .tool.on { background: #d9d9d9; box-shadow: inset 0 0 0 1px #bbb; border-radius: 2px; }
  .arr { width: 6px; display: flex; justify-content: center; flex: none; }
  .handle { width: 8px; height: 12px; flex: none; background: radial-gradient(circle, #c4c4c4 .6px, transparent .8px) center / 2px 3px; background-clip: content-box; box-sizing: border-box; padding: 0 3px; }
  .sep { width: 4px; height: 12px; box-sizing: border-box; border-left: 1px solid #d4d4d4; margin-left: 1px; flex: none; }
  .field { box-sizing: border-box; height: 12px; border: 1px solid #c3c3c3; border-radius: 1.500px; background: #fff; display: flex; align-items: center; flex: none; padding: 0 2px; }
  .field > .tri { margin-left: auto; margin-right: 2px; }
  .tol { width: 43.500px; background: #f2f2f2; color: #999; }
  .unit { width: 45px; margin: 0 1px; background: #f4f4f4; color: #999; }
  .tol .tri, .unit .tri { opacity: .55; }
  .spin { margin-left: auto; display: flex; flex-direction: column; gap: 2px; border-left: 1px solid #d4d4d4; padding-left: 1.500px; margin-right: -1px; }
  main { flex: 1; display: flex; min-height: 0; }
  .side { width: 25px; flex: none; display: flex; flex-direction: column; background: linear-gradient(90deg, #f8f8f8, #efefef); }
  .grip { height: 5.500px; }
  .sicon { height: 16.700px; display: flex; align-items: center; padding-left: 1.500px; gap: 2.500px; }
  .left { width: 149px; flex: none; display: flex; flex-direction: column; }
  h2 { margin: 0; font-size: inherit; font-weight: 400; height: 10px; line-height: 11px; padding-left: 2px; display: flex; align-items: center; flex: none; }
  .dockbtns { margin-left: auto; display: flex; gap: 1px; }
  .tools { height: 16px; display: flex; align-items: center; flex: none; padding-left: 1px; }
  .tool { width: 13.200px; height: 12px; display: flex; align-items: center; justify-content: center; flex: none; }
  .box { box-sizing: border-box; background: #fff; border: 1px solid #c8c8c8; }
  .browser { height: 155px; display: flex; flex: none; }
  .list { flex: 1; overflow: hidden; }
  .row { height: 9.380px; display: flex; align-items: center; gap: 2px; }
  .exp { width: 5px; display: flex; justify-content: center; }
  .name { padding: 0 1px; }
  .scroll { width: 7px; background: #f0f0f0; display: flex; flex-direction: column; border-left: 1px solid #ddd; }
  .scroll b { height: 8px; display: flex; align-items: center; justify-content: center; }
  .scroll em { height: 51px; margin-top: 51px; background: #fff; border: 1px solid #ccc; box-sizing: border-box; margin-bottom: auto; }
  .hl { background: #eee; }
  .tabs { display: flex; flex: none; height: 12px; }
  .tab { box-sizing: border-box; border: 1px solid #c9c9c9; background: #e1e1e1; display: flex; align-items: center; justify-content: center; border-top: 0; padding-top: 1px; }
  .tab.act { background: #f8f8f8; }
  .lo { width: 43px; } .br { width: 32px; }
  .lh { margin-top: 3.500px; }
  .lt { height: 16px; }
  .layers { flex: 1; margin-bottom: 1px; }
  .layer { height: 10px; background: #f0f0f0; display: flex; align-items: center; padding-left: 11px; }
  .layer b { text-decoration: underline; text-underline-offset: 1px; margin-left: 4px; }
  .chk { width: 10px; font: bold 7px 'DejaVu Sans', sans-serif; }
  .sw { width: 8px; height: 8px; background: #2072bc; }
  .canvas { width: 459px; margin-left: 3px; border: 1px solid #c8c8c8; background: #fff; box-sizing: border-box; flex: none; overflow: hidden; margin-bottom: 1px; }
  .canvas svg { display: block; }
  .right { width: 213px; margin-left: 4px; display: flex; flex-direction: column; flex: none; }
  .combo { background: linear-gradient(#fdfdfd, #f3f3f3); gap: 1px; }
  .top { width: 210px; margin: 2px 0 0 1px; }
  .styling { display: flex; padding-left: 1px; height: 316px; flex: none; }
  .strip { width: 20px; background: linear-gradient(#f0f0f0 19.500px, #5c5c5c 19.500px); flex: none; }
  .st { height: 16.700px; display: flex; align-items: center; justify-content: center; }
  .st.act { height: 20px; padding-top: 3px; box-sizing: border-box; }
  .body { width: 190px; padding-left: 1px; box-sizing: border-box; display: flex; flex-direction: column; }
  .sym { margin-top: 5.500px; height: 12.500px; width: 188px; }
  .symname { margin-left: 1px; }
  .symrow { display: flex; height: 75px; margin-top: 3.500px; border-bottom: 1px solid #ccc; box-sizing: border-box; flex: none; }
  .preview { width: 31px; height: 31px; background: #2072bc; margin: 20px 0 0 11px; }
  .symtree { width: 98px; height: 71px; box-sizing: border-box; background: #fff; border: 1px solid #c8c8c8; margin-left: 13px; }
  .fr { height: 9.500px; display: flex; align-items: center; padding-left: 3px; gap: 4px; }
  .fr .sw { margin-left: 1px; }
  .fr.sub { padding-left: 21px; background: #f0f0f0; }
  .btns { display: grid; grid-template-columns: 15px 15px; gap: 2px 2.500px; margin-left: 3px; align-content: start; }
  .btn { width: 15px; height: 13px; box-sizing: border-box; border: 1px solid #ccc; border-radius: 2px; background: #f8f8f8; display: flex; align-items: center; justify-content: center; }
  .type { display: flex; align-items: center; margin-top: 4px; height: 12px; flex: none; }
  .type span { width: 45px; letter-spacing: -.35px; }
  .type .field { width: 138px; height: 11.500px; }
  .form { padding: 5px 0 0 4px; }
  .fm { height: 16.700px; display: flex; align-items: center; }
  .lb { width: 35px; flex: none; letter-spacing: -.3px; }
  .fm > .field { width: 120px; height: 12px; }
  .fm > .ic { margin-left: 5px; }
  .fm > .field.num { width: 63px; }
  .fm > .mm { width: 53px; margin-left: 4px; }
  .col { padding: 0 0 0 2px; }
  .bluebar { width: 109px; height: 8px; background: #2072bc; border-radius: 1px; }
  .drop { margin-left: auto; width: 6px; height: 100%; border-left: 1px solid #bbb; display: flex; align-items: center; justify-content: center; }
  .greybar { width: 17px; height: 8px; background: #666; }
  .line { width: 17px; height: 1px; background: #333; }
  .clr { margin-left: auto; }
  .clr + .spin { margin-left: 4px; }
  .fm.off { height: 30px; }
  .off .lb { width: 28px; }
  .xy { display: flex; flex-direction: column; gap: 3.500px; }
  .xy > div { display: flex; align-items: center; }
  .ax { width: 7px; }
  .xy .field { width: 63px; height: 11px; }
  .cb { width: 7px; height: 7px; box-sizing: border-box; border: 1px solid #bbb; background: #fff; font: bold 7px/5px 'DejaVu Sans', sans-serif; flex: none; }
  .enable { display: flex; align-items: center; height: 13px; margin-top: 19px; flex: none; }
  .el { margin-left: 3px; width: 58px; }
  .de { margin-left: 22px; }
  .del { margin-left: 2px; width: 40px; }
  .render { display: flex; align-items: center; margin-top: 12px; height: 8px; padding-left: 3px; gap: 5px; }
  .render .tri { border-width: 3px 0 3px 4px; }
  .actions { display: flex; align-items: center; margin-top: 4px; height: 12px; }
  .actions .btn { width: 12px; height: 12px; margin-right: 3.500px; }
  .lu { margin-left: 71px; }
  .lut { margin-left: 2px; width: 36px; }
  .apply { width: 42px; height: 11px; box-sizing: border-box; border: 1px solid #ccc; border-radius: 2px; background: #fdfdfd; display: flex; align-items: center; justify-content: center; }
  .rt2 { height: 11px; margin-top: auto; border-top: 1px solid #ccc; margin-bottom: 1px; }
  .ls { width: 45px; } .pt { width: 60px; }
  footer { height: 13px; display: flex; align-items: center; flex: none; }
  .locate { width: 104px; color: #888; gap: 3px; padding-left: 4px; }
  .ready { width: 315px; margin-left: 4px; }
  .clab { width: 32px; } .coord { width: 47px; margin-right: 2px; }
  footer .field { height: 11px; }
  .slab { width: 15px; margin-left: 6px; }
  .scale { width: 43px; margin-right: 5px; padding-right: 0; }
  .mlab { width: 26px; margin-left: 3px; } .mag { width: 44px; }
  .rlab { width: 26px; margin-left: 3px; } .rot { width: 44px; margin-right: 4px; }
  .rend { width: 26px; margin-left: 3px; } .epsg { width: 44px; margin-left: 1px; }
</style>
